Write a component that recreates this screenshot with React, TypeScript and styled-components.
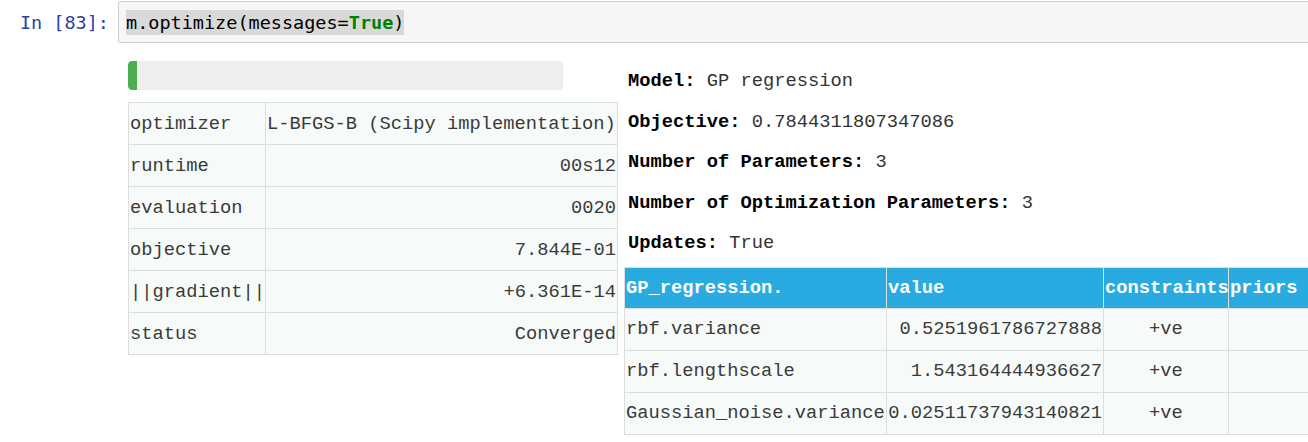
import React from "react";
import styled, { createGlobalStyle } from "styled-components";

const Global = createGlobalStyle`
  html, body { margin: 0; padding: 0; background: #fff; overflow: hidden; }
  body { width: 1308px; height: 442px; }
`;

const Page = styled.div`
  padding-top: 1px;
  width: 1320px;
`;

const InputRow = styled.div`
  display: flex;
  align-items: stretch;
`;

const Prompt = styled.div`
  width: 118px;
  box-sizing: border-box;
  padding-right: 9px;
  padding-top: 1px;
  text-align: right;
  font-family: "DejaVu Sans Mono", monospace;
  font-size: 18.5px;
  color: #303f9f;
  line-height: 42px;
`;

const CodeBox = styled.div`
  flex: 1;
  height: 42px;
  box-sizing: border-box;
  background: #f7f7f7;
  border: 1px solid #cfcfcf;
  border-radius: 2px;
  padding: 8px 0 0 7px;
`;

const Code = styled.span`
  display: inline-block;
  background: #d9d9d9;
  height: 25px;
  line-height: 26px;
  font-family: "DejaVu Sans Mono", monospace;
  font-size: 18.5px;
  color: #000;
`;

const Kw = styled.span`
  color: #008000;
  font-weight: bold;
`;

const Output = styled.div`
  display: flex;
  gap: 7px;
  padding-left: 128px;
  margin-top: 17px;
  font-family: "Liberation Mono", "Courier New", monospace;
  font-size: 18.75px;
  color: #333;
`;

const LeftCol = styled.div`
  display: flex;
  flex-direction: column;
  gap: 12px;
  width: 489px;
`;

const Progress = styled.div`
  width: 435px;
  height: 29px;
  background: #eeeeee;
  border-radius: 4px;
  overflow: hidden;
`;

const ProgressFill = styled.div`
  height: 100%;
  background: #4cae4f;
  border-radius: 4px 0 0 4px;
`;

const Table = styled.table`
  border-collapse: collapse;
  table-layout: fixed;
  background: #f6fbf9;
`;

const Td = styled.td<{ $align?: string; $w?: number }>`
  border: 1px solid #dddddd;
  height: 42px;
  padding: 0 1px;
  box-sizing: border-box;
  white-space: nowrap;
  overflow: hidden;
  text-align: ${(p) => p.$align || "left"};
  ${(p) => (p.$w ? `width: ${p.$w}px;` : "")}
  color: #3a3a3a;
`;

const Th = styled.th<{ $w?: number }>`
  border: 1px solid #dddddd;
  height: 41px;
  padding: 0 1px;
  box-sizing: border-box;
  white-space: nowrap;
  overflow: visible;
  text-align: left;
  background: #29abe2;
  color: #fff;
  font-weight: bold;
  ${(p) => (p.$w ? `width: ${p.$w}px;` : "")}
`;

const RightCol = styled.div`
  display: flex;
  flex-direction: column;
`;

const Line = styled.div`
  height: 40.6px;
  line-height: 40.6px;
  padding-left: 4px;
  color: #333;
  white-space: nowrap;
`;

const Label = styled.b`
  color: #000;
`;

const RightTable = styled(Table)`
  margin-top: 3px;
  width: 686px;
`;

const optRows: [string, string, string][] = [
  ["optimizer", "L-BFGS-B (Scipy implementation)", "left"],
  ["runtime", "00s12", "right"],
  ["evaluation", "0020", "right"],
  ["objective", "7.844E-01", "right"],
  ["||gradient||", "+6.361E-14", "right"],
  ["status", "Converged", "right"],
];

const params: [string, string, string][] = [
  ["rbf.variance", "0.5251961786727888", "+ve"],
  ["rbf.lengthscale", "1.543164444936627", "+ve"],
  ["Gaussian_noise.variance", "0.02511737943140821", "+ve"],
];

const info: [string, string][] = [
  ["Model:", "GP regression"],
  ["Objective:", "0.7844311807347086"],
  ["Number of Parameters:", "3"],
  ["Number of Optimization Parameters:", "3"],
  ["Updates:", "True"],
];

export default function App() {
  const progress = 2;
  return (
    <Page>
      <Global />
      <InputRow>
        <Prompt>In [83]:</Prompt>
        <CodeBox>
          <Code>
            m.optimize(messages=<Kw>True</Kw>)
          </Code>
        </CodeBox>
      </InputRow>
      <Output>
        <LeftCol>
          <Progress>
            <ProgressFill style={{ width: `${progress}%` }} />
          </Progress>
          <Table style={{ width: 490 }}>
            <tbody>
              {optRows.map(([k, v, a]) => (
                <tr key={k}>
                  <Td $w={137}>{k}</Td>
                  <Td $align={a}>{v}</Td>
                </tr>
              ))}
            </tbody>
          </Table>
        </LeftCol>
        <RightCol>
          {info.map(([l, v]) => (
            <Line key={l}>
              <Label>{l}</Label> {v}
            </Line>
          ))}
          <RightTable>
            <thead>
              <tr>
                <Th $w={262}>GP_regression.</Th>
                <Th $w={217}>value</Th>
                <Th $w={125}>constraints</Th>
                <Th>priors</Th>
              </tr>
            </thead>
            <tbody>
              {params.map(([n, v, c]) => (
                <tr key={n}>
                  <Td>{n}</Td>
                  <Td $align="right">{v}</Td>
                  <Td $align="center">{c}</Td>
                  <Td></Td>
                </tr>
              ))}
            </tbody>
          </RightTable>
        </RightCol>
      </Output>
    </Page>
  );
}
